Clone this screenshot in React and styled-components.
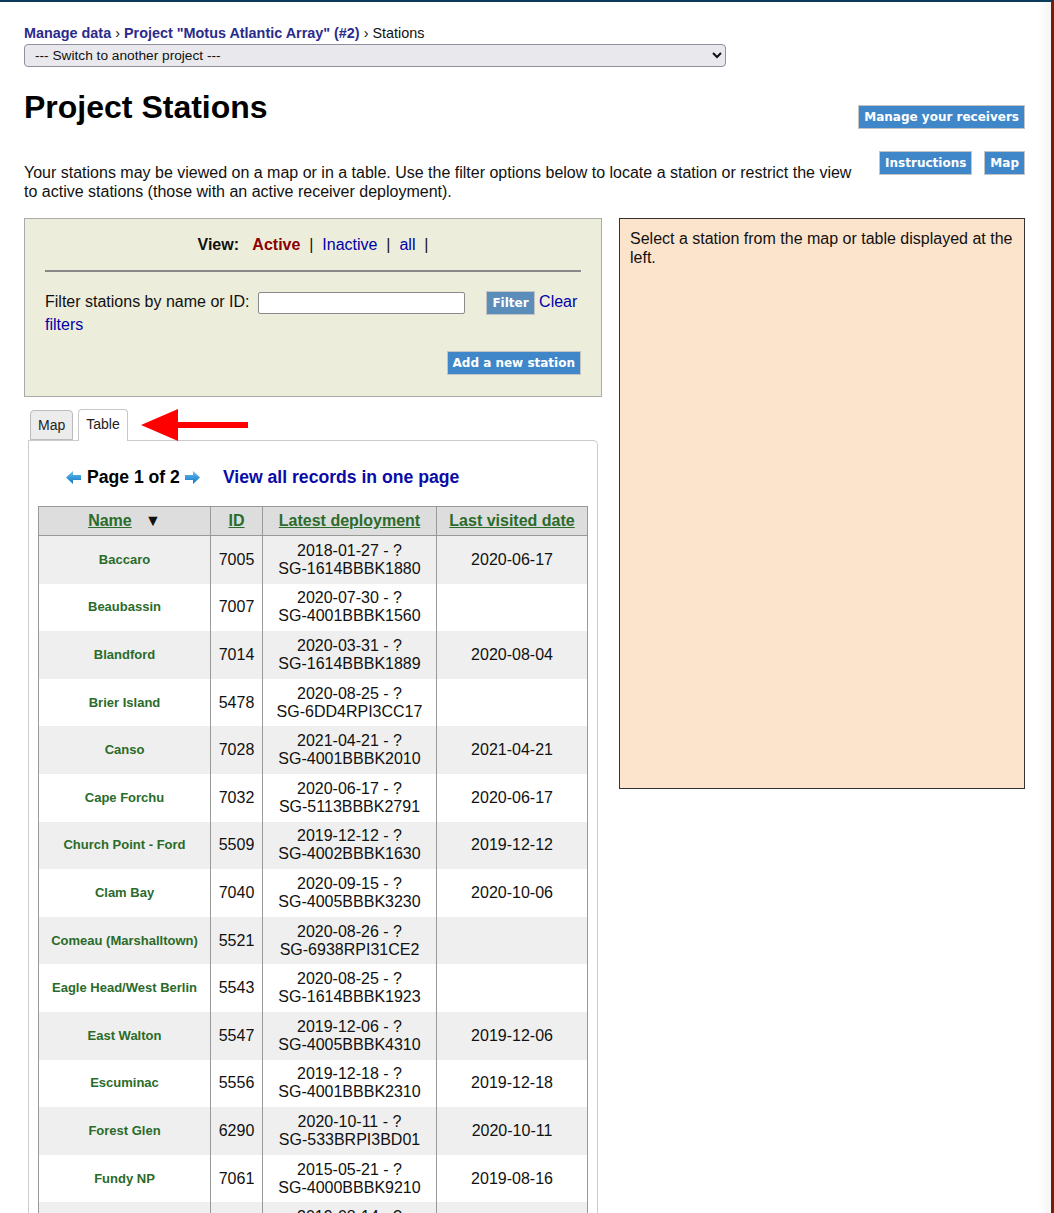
import React from 'react';
import styled, { createGlobalStyle } from 'styled-components';

const GlobalStyle = createGlobalStyle`
  html, body {
    margin: 0;
    padding: 0;
    background: #fff;
  }
  body {
    font-family: "Liberation Sans", Arial, sans-serif;
    color: #111;
  }
`;

const stations = [
  ['Baccaro', '7005', '2018-01-27 - ?', 'SG-1614BBBK1880', '2020-06-17'],
  ['Beaubassin', '7007', '2020-07-30 - ?', 'SG-4001BBBK1560', ''],
  ['Blandford', '7014', '2020-03-31 - ?', 'SG-1614BBBK1889', '2020-08-04'],
  ['Brier Island', '5478', '2020-08-25 - ?', 'SG-6DD4RPI3CC17', ''],
  ['Canso', '7028', '2021-04-21 - ?', 'SG-4001BBBK2010', '2021-04-21'],
  ['Cape Forchu', '7032', '2020-06-17 - ?', 'SG-5113BBBK2791', '2020-06-17'],
  ['Church Point - Ford', '5509', '2019-12-12 - ?', 'SG-4002BBBK1630', '2019-12-12'],
  ['Clam Bay', '7040', '2020-09-15 - ?', 'SG-4005BBBK3230', '2020-10-06'],
  ['Comeau (Marshalltown)', '5521', '2020-08-26 - ?', 'SG-6938RPI31CE2', ''],
  ['Eagle Head/West Berlin', '5543', '2020-08-25 - ?', 'SG-1614BBBK1923', ''],
  ['East Walton', '5547', '2019-12-06 - ?', 'SG-4005BBBK4310', '2019-12-06'],
  ['Escuminac', '5556', '2019-12-18 - ?', 'SG-4001BBBK2310', '2019-12-18'],
  ['Forest Glen', '6290', '2020-10-11 - ?', 'SG-533BRPI3BD01', '2020-10-11'],
  ['Fundy NP', '7061', '2015-05-21 - ?', 'SG-4000BBBK9210', '2019-08-16'],
  ['Gaspereau', '5570', '2019-08-14 - ?', 'SG-4001BBBK0810', '2019-08-14'],
  ['Grand Manan', '5583', '2020-08-20 - ?', 'SG-6DD4RPI3BB10', ''],
];

const Arrow = ({ dir }) => (
  <svg width="15" height="13" viewBox="0 0 15 13">
    <defs>
      <linearGradient id={'ag' + dir} x1="0" y1="0" x2="0" y2="1">
        <stop offset="0" stopColor="#6cc0f0" />
        <stop offset="1" stopColor="#0a74c4" />
      </linearGradient>
    </defs>
    <polygon
      points={dir === 'left' ? '15,4 7,4 7,0 0,6.5 7,13 7,9 15,9' : '0,4 8,4 8,0 15,6.5 8,13 8,9 0,9'}
      fill={'url(#ag' + dir + ')'}
    />
  </svg>
);

const App = () => {
  return (
    <>
      <GlobalStyle />
      <Page>
        <Breadcrumb>
          <Crumb href="#">Manage data</Crumb> › <Crumb href="#">Project "Motus Atlantic Array" (#2)</Crumb> › Stations
        </Breadcrumb>
        <ProjectSelect defaultValue="">
          <option value="">--- Switch to another project ---</option>
        </ProjectSelect>

        <Header>
          <HeaderText>
            <Title>Project Stations</Title>
            <Intro>
              Your stations may be viewed on a map or in a table. Use the filter options below to locate a station or
              restrict the view to active stations (those with an active receiver deployment).
            </Intro>
          </HeaderText>
          <HeaderButtons>
            <Button>Manage your receivers</Button>
            <ButtonRow>
              <Button>Instructions</Button>
              <Button>Map</Button>
            </ButtonRow>
          </HeaderButtons>
        </Header>

        <Columns>
          <LeftCol>
            <FilterPanel>
              <ViewLine>
                <b>View:</b>&nbsp;&nbsp; <ActiveLink>Active</ActiveLink> &nbsp;|&nbsp; <Link href="#">Inactive</Link>{' '}
                &nbsp;|&nbsp; <Link href="#">all</Link> &nbsp;|
              </ViewLine>
              <Rule />
              <FilterLine>
                Filter stations by name or ID: <SearchInput type="text" /> <FilterButton muted>Filter</FilterButton>{' '}
                <Link href="#">Clear filters</Link>
              </FilterLine>
              <AddRow>
                <Button>Add a new station</Button>
              </AddRow>
            </FilterPanel>

            <Tabs>
              <Tab>Map</Tab>
              <Tab active>Table</Tab>
              <Pointer width="108" height="34" viewBox="0 0 108 34">
                <polygon points="0,17 37,1 37,14 107,14 107,20 37,20 37,33" fill="#f00" />
              </Pointer>
            </Tabs>

            <TabBody>
              <Pager>
                <Arrow dir="left" />
                <PageLabel>Page 1 of 2</PageLabel>
                <Arrow dir="right" />
                <ViewAll href="#">View all records in one page</ViewAll>
              </Pager>
              <Table>
                <colgroup>
                  <col style={{ width: 172 }} />
                  <col style={{ width: 52 }} />
                  <col style={{ width: 174 }} />
                  <col style={{ width: 151 }} />
                </colgroup>
                <thead>
                  <tr>
                    <Th>
                      <SortLink href="#">Name</SortLink>&nbsp;&nbsp; ▼
                    </Th>
                    <Th>
                      <SortLink href="#">ID</SortLink>
                    </Th>
                    <Th>
                      <SortLink href="#">Latest deployment</SortLink>
                    </Th>
                    <Th>
                      <SortLink href="#">Last visited date</SortLink>
                    </Th>
                  </tr>
                </thead>
                <tbody>
                  {stations.map((s, i) => (
                    <Row key={s[0]} odd={i % 2 === 0}>
                      <NameCell>{s[0]}</NameCell>
                      <Td>{s[1]}</Td>
                      <Td>
                        {s[2]}
                        <br />
                        {s[3]}
                      </Td>
                      <Td>{s[4]}</Td>
                    </Row>
                  ))}
                </tbody>
              </Table>
            </TabBody>
          </LeftCol>

          <InfoPanel>Select a station from the map or table displayed at the left.</InfoPanel>
        </Columns>
      </Page>
    </>
  );
};

const Page = styled.div`
  box-sizing: border-box;
  width: 1054px;
  min-height: 100vh;
  border-top: 2px solid #0b3a5a;
  border-right: 3px solid #7a1d07;
  padding: 23px 26px 0 24px;
  background: linear-gradient(to right, #fff calc(100% - 14px), #f5f5f5);
`;

const Breadcrumb = styled.div`
  font-size: 14.4px;
  line-height: 16px;
  color: #111;
`;

const Crumb = styled.a`
  color: #2b2b8c;
  font-weight: bold;
  text-decoration: none;
`;

const ProjectSelect = styled.select`
  display: block;
  margin-top: 3px;
  width: 702px;
  height: 23px;
  padding: 0 6px;
  background: #e9e9ed;
  border: 1px solid #8f8f9d;
  border-radius: 4px;
  font-family: "Liberation Sans", Arial, sans-serif;
  font-size: 13.7px;
  color: #111;
`;

const Header = styled.div`
  display: flex;
  margin-top: 22px;
`;

const HeaderText = styled.div`
  flex: 1;
`;

const Title = styled.h1`
  margin: 0;
  font-size: 32px;
  line-height: 36px;
  font-weight: bold;
  color: #000;
`;

const Intro = styled.p`
  margin: 38px 0 0;
  font-size: 16px;
  line-height: 19px;
`;

const HeaderButtons = styled.div`
  width: 165px;
  margin-left: 4px;
  padding-top: 16px;
  display: flex;
  flex-direction: column;
  align-items: flex-end;
`;

const ButtonRow = styled.div`
  display: flex;
  gap: 12px;
  margin-top: 22px;
`;

const Button = styled.button`
  box-sizing: border-box;
  height: 24px;
  padding: 0 5px;
  border: 1px solid #c4c4c4;
  background: ${(p) => (p.muted ? '#5a8db9' : '#3f87c9')};
  color: #fff;
  font-family: "DejaVu Sans", Verdana, sans-serif;
  font-weight: bold;
  font-size: 12px;
  line-height: 20px;
  cursor: pointer;
  white-space: nowrap;
`;

const FilterButton = styled(Button)`
  vertical-align: middle;
  margin-left: 17px;
`;

const Columns = styled.div`
  display: flex;
  align-items: flex-start;
  gap: 17px;
  margin-top: 17px;
`;

const LeftCol = styled.div`
  width: 578px;
`;

const FilterPanel = styled.div`
  box-sizing: border-box;
  height: 179px;
  background: #ededdc;
  border: 1px solid #aaa;
  padding: 16px 20px 0;
`;

const ViewLine = styled.div`
  text-align: center;
  font-size: 16px;
  line-height: 19px;
`;

const ActiveLink = styled.b`
  color: #8b0000;
`;

const Link = styled.a`
  color: #0000a8;
  text-decoration: none;
`;

const Rule = styled.div`
  margin-top: 16px;
  border-top: 2px solid #888;
`;

const FilterLine = styled.div`
  margin-top: 19px;
  font-size: 16px;
  line-height: 19px;
`;

const SearchInput = styled.input`
  box-sizing: border-box;
  width: 207px;
  height: 22px;
  margin-left: 4px;
  vertical-align: middle;
  border: 1px solid #8a8a8a;
  border-radius: 2px;
  background: #fff;
`;

const AddRow = styled.div`
  display: flex;
  justify-content: flex-end;
  margin-top: 17px;
`;

const Tabs = styled.div`
  display: flex;
  align-items: flex-end;
  gap: 5px;
  margin: 12px 0 0 6px;
  height: 31px;
  position: relative;
  z-index: 1;
`;

const Tab = styled.div`
  box-sizing: border-box;
  height: ${(p) => (p.active ? '32px' : '30px')};
  padding: 0 7px;
  margin-bottom: ${(p) => (p.active ? '-1px' : '0')};
  border: 1px solid ${(p) => (p.active ? '#c8c8c8' : '#bbb')};
  border-bottom: ${(p) => (p.active ? 'none' : '1px solid #bbb')};
  border-radius: 4px 4px 0 0;
  background: ${(p) => (p.active ? '#fff' : '#ececec')};
  font-size: 14px;
  line-height: 29px;
  color: #222;
`;

const Pointer = styled.svg`
  align-self: center;
  margin-left: 8px;
`;

const TabBody = styled.div`
  margin: 0 4px;
  border: 1px solid #ccc;
  border-bottom: none;
  border-radius: 0 5px 0 0;
  padding: 26px 9px 0;
  background: #fff;
`;

const Pager = styled.div`
  display: flex;
  align-items: center;
  padding-left: 28px;
  height: 21px;
  font-size: 17.6px;
  font-weight: bold;
`;

const PageLabel = styled.span`
  margin: 0 5px 0 6px;
  color: #000;
`;

const ViewAll = styled.a`
  margin-left: 23px;
  color: #0a0aa8;
  text-decoration: none;
`;

const Table = styled.table`
  margin-top: 18px;
  width: 549px;
  table-layout: fixed;
  border-collapse: collapse;
  border: 1px solid #999;
`;

const Th = styled.th`
  height: 28px;
  padding: 0 4px;
  background: #ddd;
  border: 1px solid #999;
  font-size: 16px;
  font-weight: bold;
  white-space: nowrap;
`;

const SortLink = styled.a`
  color: #2b6b2b;
  text-decoration: underline;
`;

const Row = styled.tr`
  background: ${(p) => (p.odd ? '#efefef' : '#fff')};
`;

const Td = styled.td`
  padding: 5.8px 4px;
  border-left: 1px solid #999;
  border-right: 1px solid #999;
  text-align: center;
  font-size: 16px;
  line-height: 18px;
  color: #111;
`;

const NameCell = styled(Td)`
  font-size: 13px;
  font-weight: bold;
  color: #2a6b2a;
`;

const InfoPanel = styled.div`
  box-sizing: border-box;
  width: 408px;
  height: 571px;
  padding: 10px 10px;
  background: #fce4cc;
  border: 1px solid #333;
  font-size: 16px;
  line-height: 19px;
  color: #111;
`;

export default App;
